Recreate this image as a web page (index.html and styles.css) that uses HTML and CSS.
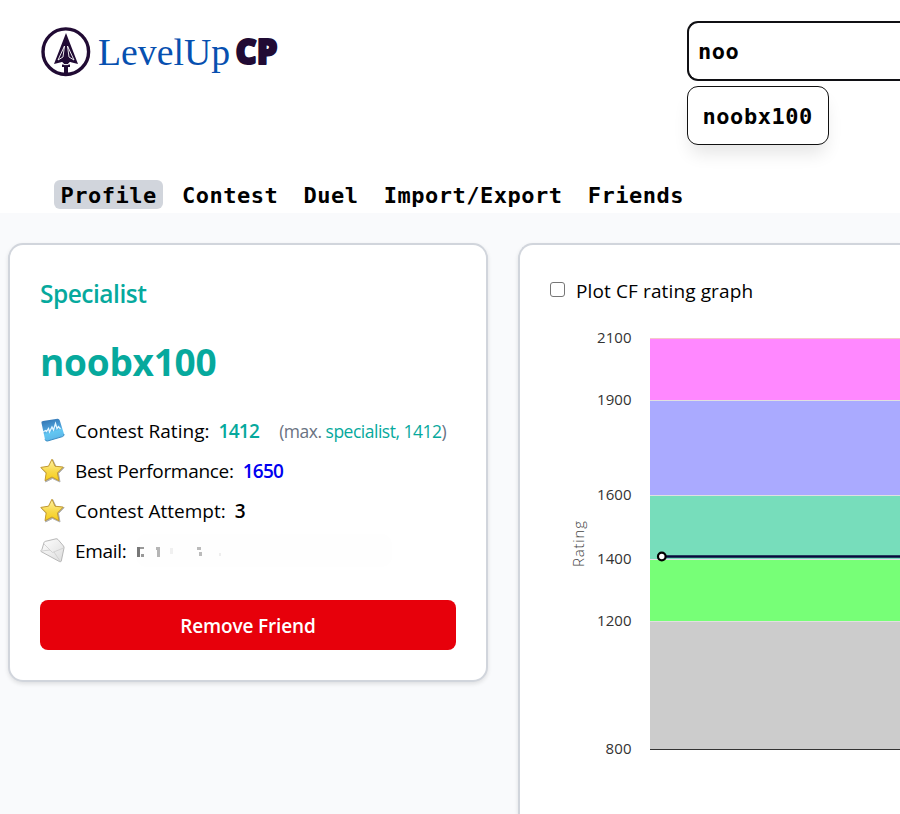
FILE: index.html
```html
<!DOCTYPE html>
<html lang="en">
<head>
<meta charset="utf-8">
<title>LevelUp CP</title>
<link rel="stylesheet" href="styles.css">
</head>
<body>
<header class="header">
  <div class="topbar">
    <svg class="logo" width="250" height="60" viewBox="40 20 250 60">
      <circle cx="65.8" cy="51.7" r="22.8" fill="none" stroke="#210b34" stroke-width="3.4"/>
      <path fill="#210b34" d="M66 33 L78 64 L70 62 L68 64 H64 L62 62 L54 64 Z M62 64.5 H70 V67 H68 V75 H64 V67 H62 Z"/>
      <path fill="none" stroke="#fff" stroke-width=".9" d="M64.5 46 L58 60 L63 57 L64.5 46 M67.5 46 L74 60 L69 57 L67.5 46 M61.5 62 L64 64.6 H68 L70.5 62"/>
      <text class="logo-name" x="98" y="64.5" textLength="132" lengthAdjust="spacingAndGlyphs">LevelUp</text>
      <text class="logo-cp" x="235.5" y="64" textLength="42" lengthAdjust="spacingAndGlyphs">CP</text>
    </svg>
    <div class="search">
      <input class="search-input" type="text" value="noo">
      <div class="suggestion">noobx100</div>
    </div>
  </div>
  <nav class="nav">
    <a class="nav-link active">Profile</a>
    <a class="nav-link">Contest</a>
    <a class="nav-link">Duel</a>
    <a class="nav-link">Import/Export</a>
    <a class="nav-link">Friends</a>
  </nav>
</header>
<main class="content">
  <section class="card profile">
    <div class="rank">Specialist</div>
    <h1 class="handle">noobx100</h1>
    <div class="stats">
      <div class="row">
        <svg class="icon" width="25" height="25" viewBox="0 0 25 25">
          <defs>
            <linearGradient id="blue" x1="0" y1="0" x2="0.3" y2="1"><stop offset="0" stop-color="#2e6dac"/><stop offset=".55" stop-color="#4fa3dc"/><stop offset=".7" stop-color="#62c7f2"/><stop offset="1" stop-color="#5db7e8"/></linearGradient>
            <linearGradient id="gold" x1="0" y1="0" x2="0" y2="1"><stop offset="0" stop-color="#fff3a8"/><stop offset=".55" stop-color="#f8d94b"/><stop offset="1" stop-color="#f6cd18"/></linearGradient>
            <linearGradient id="paper" x1="0" y1="0" x2="1" y2="1"><stop offset="0" stop-color="#fff"/><stop offset="1" stop-color="#dcdcdc"/></linearGradient>
          </defs>
          <path d="M1.5 5 Q.7 3.5 3 3 L17.5 .8 Q19.2 .7 19.8 2.5 L24 16 Q24.3 18 22.5 18.6 L7.5 23 Q5.5 23.4 5 21.5 Z" fill="url(#blue)"/>
          <path d="M3 14 L5.5 12.5 L6.5 13.5 L8.5 10.5 L9.5 14 L12 9 L13.5 12 L15.5 5.5 L17 10.5 L18.5 8.5 L20.5 11" fill="none" stroke="#e4f6ff" stroke-width="1.3"/>
          <path d="M5 21.5 Q6 23.4 7.5 23 L22.5 18.6 Q24.3 18 24 16" fill="none" stroke="#398bc3" stroke-width="1"/>
        </svg>
        <span class="label fit-rating">Contest Rating:</span><b class="value teal">1412</b>
        <span class="max">(max. <span class="teal">specialist, 1412</span>)</span>
      </div>
      <div class="row">
        <svg class="icon" width="25" height="25" viewBox="0 0 25 25"><path d="M12.8 1.8 L16 8.5 L24.2 9.6 L18.5 15.5 L20 24 L12.5 20.5 L5.5 24 L6.6 15.8 L1 10 L9 8.7 Z" fill="#8d8d85" opacity=".75" stroke="#999" stroke-linejoin="round"/><path d="M12 1.2 L15 8.2 L23.2 9.1 L17.4 14.9 L18.9 22.7 L12 19 L5 22.7 L6.2 14.9 L.8 9.4 L8.5 8.2 Z" fill="url(#gold)" stroke="#c39a33" stroke-width="1" stroke-linejoin="round"/></svg>
        <span class="label">Best Performance:</span><b class="value blue">1650</b>
      </div>
      <div class="row">
        <svg class="icon" width="25" height="25" viewBox="0 0 25 25"><path d="M12.8 1.8 L16 8.5 L24.2 9.6 L18.5 15.5 L20 24 L12.5 20.5 L5.5 24 L6.6 15.8 L1 10 L9 8.7 Z" fill="#8d8d85" opacity=".75" stroke="#999" stroke-linejoin="round"/><path d="M12 1.2 L15 8.2 L23.2 9.1 L17.4 14.9 L18.9 22.7 L12 19 L5 22.7 L6.2 14.9 L.8 9.4 L8.5 8.2 Z" fill="url(#gold)" stroke="#c39a33" stroke-width="1" stroke-linejoin="round"/></svg>
        <span class="label fit-attempt">Contest Attempt:</span><b class="value">3</b>
      </div>
      <div class="row">
        <svg class="icon" width="25" height="25" viewBox="0 0 25 25"><path d="M1 13.5 Q.5 12.5 2 11.3 L4 4.5 Q4.3 3.7 5.2 3.4 L16 .8 Q17 .6 18 1.5 L23.5 8 Q24.2 9 24 10 L21.3 23 Q21 24.2 19.5 23.6 Z" fill="url(#paper)" stroke="#b0b0b0" stroke-width=".9"/><path d="M4 6 L12.5 14.5 L23.5 10 M1.5 13 L10 12 M14 14 L20 23" fill="none" stroke="#cfcfcf" stroke-width=".9"/></svg>
        <span class="label">Email:</span>
        <svg class="redacted" width="260" height="34" viewBox="0 0 260 34">
          <defs><filter id="soft"><feGaussianBlur stdDeviation=".7"/></filter></defs>
          <rect width="256" height="33" rx="10" fill="#fefefe"/>
          <g filter="url(#soft)"><path d="M1 13h3v10h-3z" fill="#777"/><path d="M4 13h4v2h-4zM5 20h3v3h-3z" fill="#999"/><path d="M20 13h4v3h-4zM21 16h3v7h-3z" fill="#b5b5b5"/><path d="M34 14h3v6h-3z" fill="#f0f0f0"/><path d="M61 13h4v3h-4zM63 18h3v4h-3z" fill="#bbb"/><path d="M83 19h2v3h-2z" fill="#eee"/></g>
        </svg>
      </div>
    </div>
    <button class="remove">Remove Friend</button>
  </section>
  <section class="card graph">
    <label class="plot"><span class="checkbox"></span><span class="plot-text">Plot CF rating graph</span></label>
    <svg class="chart" width="350" height="430" viewBox="550 325 350 430">
      <rect x="650" y="338" width="250" height="63" fill="#ff88ff"/>
      <rect x="650" y="401" width="250" height="95" fill="#aaaaff"/>
      <rect x="650" y="496" width="250" height="63" fill="#77ddbb"/>
      <rect x="650" y="559" width="250" height="63" fill="#77ff77"/>
      <rect x="650" y="622" width="250" height="127" fill="#cccccc"/>
      <path d="M650 400.5H900M650 495.5H900M650 559.5H900M650 621.5H900" stroke="#e0e0e0"/>
      <path d="M650 338.5H900" stroke="#f5c8c8"/>
      <path d="M650 749.5H900" stroke="#333"/>
      <path d="M662 556.5H900" stroke="#08083c" stroke-width="2.6"/>
      <circle cx="661.8" cy="556.5" r="3.8" fill="#fff" stroke="#000" stroke-width="2.2"/>
      <g class="ticks">
        <text x="597" y="343" textLength="34.5">2100</text>
        <text x="597" y="405" textLength="34.5">1900</text>
        <text x="597" y="500" textLength="34.5">1600</text>
        <text x="597" y="564" textLength="34.5">1400</text>
        <text x="597" y="626" textLength="34.5">1200</text>
        <text x="605.5" y="754" textLength="26">800</text>
      </g>
      <text class="axis" transform="translate(583.5 567) rotate(-90)" textLength="46">Rating</text>
    </svg>
  </section>
</main>
</body>
</html>
```
FILE: styles.css
```css
* { box-sizing: border-box; }
body {
  margin: 0;
  height: 814px;
  overflow: hidden;
  background: #f9fafc;
  color: #000;
  font-family: "Open Sans", "Noto Sans", sans-serif;
}
.header {
  height: 213px;
  background: #fff;
}
.topbar {
  height: 180px;
  display: flex;
  align-items: flex-start;
  justify-content: space-between;
  padding: 20px 0 0 40px;
}
.logo-name {
  font: 38px "Liberation Serif", serif;
  fill: #0750b0;
}
.logo-cp {
  font: 800 35px "Open Sans", sans-serif;
  fill: #210b34;
  stroke: #210b34;
  stroke-width: 2;
  stroke-linejoin: round;
}
.search {
  width: 213px;
  padding-top: 1px;
}
.search-input {
  display: block;
  width: 213px;
  height: 60px;
  border: 2px solid #101014;
  border-right: 0;
  border-radius: 11px 0 0 11px;
  padding: 0 9px;
  outline: 0;
  font: bold 22px "DejaVu Sans Mono", monospace;
  letter-spacing: .55px;
}
.suggestion {
  width: 142px;
  height: 59px;
  margin-top: 5px;
  padding-left: 14.5px;
  border: 1px solid #111;
  border-radius: 11px;
  background: #fff;
  box-shadow: 0 12px 18px -4px #0000001c;
  font: bold 22px/59px "DejaVu Sans Mono", monospace;
  letter-spacing: .55px;
}
.nav {
  display: flex;
  gap: 12.8px;
  padding-left: 54px;
}
.nav-link {
  height: 29px;
  padding: 0 6px 0 6.5px;
  border-radius: 6px;
  font: bold 22px/32px "DejaVu Sans Mono", monospace;
  letter-spacing: .5px;
}
.active { background: #d1d5dc; }
.content {
  display: flex;
  align-items: flex-start;
  gap: 30px;
  padding: 30px 0 0 8px;
}
.card {
  flex: none;
  background: #fff;
  border: 2px solid #d1d5dc;
  border-radius: 15px;
  box-shadow: 0 2px 4px #0000001c;
}
.profile {
  width: 480px;
  height: 439px;
  padding: 30px;
}
.rank {
  height: 40px;
  line-height: 38px;
  font-size: 24.5px;
  font-weight: 600;
  letter-spacing: -.5px;
  color: #06a99d;
}
.handle {
  margin: 20px 0 0;
  height: 56px;
  line-height: 54px;
  font-size: 37px;
  font-weight: 700;
  letter-spacing: -.25px;
  color: #06a99d;
}
.stats { margin-top: 20px; }
.row {
  display: flex;
  align-items: center;
  height: 40px;
  font-size: 19px;
  white-space: nowrap;
}
.icon { margin: -1px 10px 0 0; }
.label { letter-spacing: -.3px; }
.fit-rating { letter-spacing: .03px; }
.fit-attempt { letter-spacing: .02px; }
.value {
  margin-left: 9px;
  font-weight: 600;
  letter-spacing: -.7px;
}
.teal { color: #06a99d; }
.blue { color: #0000f0; }
.max {
  margin-left: 20px;
  font-size: 17.5px;
  letter-spacing: -.5px;
  color: #6a7282;
}
.redacted { margin-left: 9px; }
.remove {
  display: block;
  width: 416px;
  height: 50px;
  margin-top: 29px;
  padding: 2px 0 0;
  border: 0;
  border-radius: 8px;
  background: #e7000b;
  color: #fff;
  font: 600 19px "Open Sans", sans-serif;
  letter-spacing: -.15px;
}
.graph {
  width: 382px;
  height: 571px;
  padding: 30px 0 0 30px;
  border-width: 2px 0 0 2px;
  border-radius: 15px 0 0 0;
}
.plot {
  display: flex;
  align-items: center;
  height: 30px;
  font-size: 19px;
  letter-spacing: .12px;
}
.plot-text { padding-top: 2px; }
.checkbox {
  width: 15px;
  height: 15px;
  margin: -1px 11px 0 0;
  border: 1px solid #767676;
  border-radius: 3px;
}
.chart {
  display: block;
  margin-top: 20px;
}
.ticks {
  font-size: 15px;
  fill: #333;
}
.axis {
  font-size: 15px;
  font-weight: 300;
  fill: #444;
}
```
